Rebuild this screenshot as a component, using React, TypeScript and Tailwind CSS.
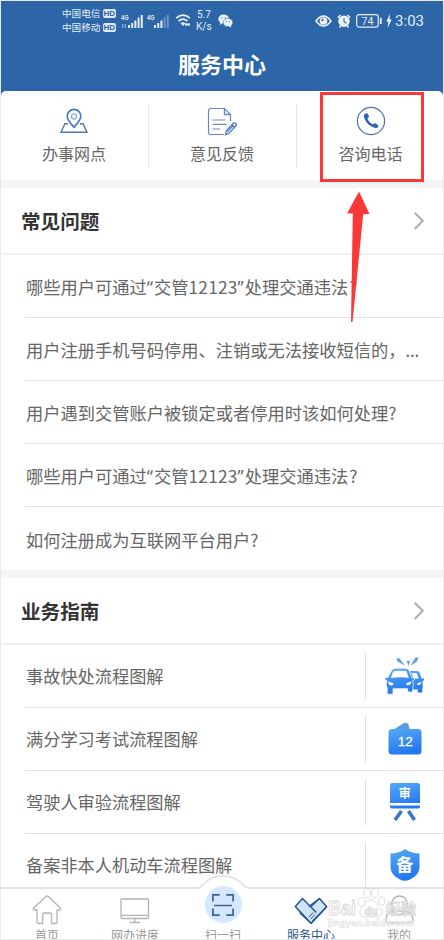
import React, { FC, ReactNode } from "react";

type IconProps = {
	className?: string;
};

// Status bar icons
const Signal: FC<{ weak?: boolean }> = ({ weak = false }) => (
	<svg className="w-[22px] h-[18px]" viewBox="0 0 22 18" fill="#e4edf8">
		<text x="0" y="8" fontSize="8" fontWeight="700" fontFamily="Liberation Sans, sans-serif" textLength="7.5" lengthAdjust="spacingAndGlyphs">
			4G
		</text>
		{!weak && <path d="M1 12h1.3v4H1zM3.6 12h1.3v4H3.6z" opacity="0.5" />}
		<path d="M7 13h2v3H7zM10.2 11h2v5h-2zM13.4 8.5h2V16h-2z" />
		<path d="M16.6 5.5h2V16h-2zM19.8 3h2v13h-2z" opacity={weak ? 0.35 : 1} />
	</svg>
);

const Wifi: FC<IconProps> = ({ className }) => (
	<svg className={className} viewBox="0 0 17 15" fill="none" stroke="#e4edf8" strokeWidth="1.8">
		<path d="M1.2 5.2Q8 -1 14.8 5.2M3.6 8Q8 4.2 12.4 8" />
		<path d="M5.5 10.3Q8 8.4 10.5 10.3L8 13z" fill="#e4edf8" stroke="none" />
		<path d="M10 11.5h5" strokeWidth="2.2" />
	</svg>
);

const WeChat: FC<IconProps> = ({ className }) => (
	<svg className={className} viewBox="0 0 15 14">
		<ellipse cx="5.7" cy="5" rx="5.4" ry="4.6" fill="#e9f1fa" />
		<path d="M2.5 8L2 11l3-2z" fill="#e9f1fa" />
		<ellipse cx="10" cy="8.5" rx="4.8" ry="4.1" fill="#e9f1fa" stroke="#2d67a9" strokeWidth="0.5" />
		<path d="M10.5 12l2.6 1.6-.3-2.5z" fill="#e9f1fa" />
		<g fill="#2d67a9">
			<circle cx="3.9" cy="3.9" r="0.6" />
			<circle cx="7.3" cy="3.9" r="0.6" />
			<circle cx="8.4" cy="7.6" r="0.5" />
			<circle cx="11.5" cy="7.6" r="0.5" />
		</g>
	</svg>
);

const Eye: FC<IconProps> = ({ className }) => (
	<svg className={className} viewBox="0 0 17 12" fill="none" stroke="#f1f6fc" strokeWidth="1.5">
		<path d="M1 6Q8.5 -4 16 6Q8.5 16 1 6Z" />
		<circle cx="8.5" cy="6" r="3.8" fill="#f1f6fc" stroke="none" />
		<path d="M6 5.8A2.3 2.3 0 0 1 8.5 3.7V6z" fill="#2d67a9" stroke="none" />
	</svg>
);

const Alarm: FC<IconProps> = ({ className }) => (
	<svg className={className} viewBox="0 0 14 14" fill="none" stroke="#f1f6fc">
		<circle cx="7" cy="7.3" r="5.7" fill="#f1f6fc" stroke="none" />
		<path d="M.8 3.8L3.6 1M13.2 3.8L10.4 1M2.5 13.5l1.3-1.7M11.5 13.5l-1.3-1.7" strokeWidth="1.5" />
		<path d="M7 4v3.6l2.4 1.6" stroke="#2d67a9" strokeWidth="1.1" />
	</svg>
);

const Battery: FC = () => (
	<svg className="w-[27px] h-[14px]" viewBox="0 0 27 14" fill="none" stroke="#e4edf8">
		<rect x="0.7" y="0.7" width="21.6" height="12.4" rx="2.5" strokeWidth="1.2" />
		<path d="M24.8 3.8v6.2" strokeWidth="1.8" />
		<text x="5.5" y="10.8" fontSize="10.5" fill="#e4edf8" stroke="none" fontFamily="Roboto, sans-serif">
			74
		</text>
	</svg>
);

const Bolt: FC = () => (
	<svg className="w-[6px] h-[14px]" viewBox="0 0 6 14" fill="#f1f6fc">
		<path d="M4 0L.3 7.5h2L1.6 14 5.7 5.500H3.500z" />
	</svg>
);

// Shortcut icons
const Location: FC = () => (
	<svg className="w-[28px] h-[26px]" viewBox="0 0 28 26" fill="none" stroke="#4a76c4" strokeWidth="1.4">
		<path d="M8 15.7H4.9L1 24.3h26L23 15.700h-3" stroke="#5277b8" />
		<path d="M14 19.3C11.5 16 7.2 12.3 7.2 8.2a6.8 6.8 0 0 1 13.6 0c0 4.1-4.3 7.8-6.8 11.1z" strokeWidth="1.7" />
		<circle cx="14" cy="8.4" r="2.6" stroke="#89a9df" strokeWidth="1.3" />
	</svg>
);

const Feedback: FC = () => (
	<svg className="w-[30px] h-[29px]" viewBox="0 0 30 29" fill="none" stroke="#6688c8" strokeWidth="1.2">
		<path d="M17 27.5H3.5a2 2 0 0 1-2-2V3.5a2 2 0 0 1 2-2h14l6 6V14" />
		<path d="M17.5 1.5v6h6" strokeWidth="1.4" />
		<path d="M5.5 13h13M5.5 17.3h14M5.5 22h7.5" />
		<path d="M18.5 27.8l.8-4 6.8-7.3a1.8 1.8 0 0 1 2.7 2.5l-6.7 7.3zM20.5 24.8l6-6.5M24.8 17.9l2.6 2.5" stroke="#4774bd" />
	</svg>
);

const Phone: FC = () => (
	<svg className="w-[30px] h-[30px]" viewBox="0 0 30 30" fill="none">
		<circle cx="15" cy="15" r="13.6" stroke="#4d72b1" strokeWidth="1.2" />
		<path
			d="M8.6 8.2l1.8-.9c.6-.3 1.2 0 1.5.6l1 2.3c.2.6.1 1-.4 1.4l-1.1.9c.9 2.600 2.800 4.600 5.500 6l1.300-1c.5-.4 1-.4 1.500-.1l2.300 1.500c.5.4.6.9.3 1.500-.8 1.500-2.500 2-4.400 1.200C12.800 19.700 9.400 16 8 11.300c-.3-1.200-.2-2.400.6-3.100z"
			fill="#2d63b8"
		/>
	</svg>
);

// Guide icons
const BlueGradient: FC<{ id: string }> = ({ id }) => (
	<defs>
		<linearGradient id={id} x1="0" y1="0" x2="0.3" y2="1">
			<stop offset="0" stopColor="#56aaf5" />
			<stop offset="1" stopColor="#2478ee" />
		</linearGradient>
	</defs>
);

const Cars: FC = () => (
	<svg className="w-[40px] h-[38px]" viewBox="0 0 40 38">
		<path d="M11.5 1.2h2.8L20 8.6l-7.6-4.2zM21.5 4.2l3.3-.6L24 9zM30.5.5h3L32 4.5 25.5 8.8z" fill="#5f9fdc" />
		<BlueGradient id="cars" />
		<g fill="url(#cars)">
			<path d="M25 14h7c1.3 0 2.4.9 2.8 2.3l1.8 5.5 2.4-.5v2.2l-1.5.5.3 4.8-.5 3v3.7h-4.6v-3h-5z" />
			<path
				d="M6.3 14.2c.6-1.5 1.5-2.2 3-2.4 4.3-.6 8.5-.6 12.5 0 1.2.2 2 .8 2.4 2l2.7 7.2 2.4-.5.2 2.3-1.7.8.4 4.6-.5 3.2v3.5h-5v-3.2H8v5.500H2.200V31l-1-2.800.5-5-1.900-.8v-2.200l3 .4z"
				stroke="#fff"
				strokeWidth="0.7"
			/>
		</g>
		<path d="M8 14.4c4.7-1 9.7-1 13.6-.2l2.2 6.6c-6-.9-12-.8-18 .2z" fill="#fff" />
		<path d="M26.5 16h5.2l2 5.5h-5z" fill="#fff" />
		<path d="M3.2 24.5l5 1.8c.4 1.3-.4 2.2-1.8 2.2-2-.2-3.2-1.500-3.200-4zM26.300 24.200l-5 2c-.4 1.300.4 2.100 1.800 2 2-.2 3.200-1.500 3.200-4zM36.300 24.800l-4 1.600c-.2 1 .3 1.700 1.300 1.700 1.700-.2 2.700-1.300 2.700-3.300z" fill="#fff" />
	</svg>
);

const Wallet: FC = () => (
	<svg className="w-[34px] h-[33px]" viewBox="0 0 34 33">
		<BlueGradient id="wallet" />
		<path d="M5 8l10-6.5c2.5-1.3 5-.5 5.700 1.500l1 4z" fill="#5a9fe6" />
		<rect x="0.5" y="7" width="33" height="25.5" rx="3.5" fill="url(#wallet)" />
		<text x="17.2" y="24" textAnchor="middle" fontSize="13.5" fill="#fff" fontFamily="Liberation Sans, sans-serif" stroke="#fff" strokeWidth="0.3">
			12
		</text>
	</svg>
);

const Easel: FC = () => (
	<svg className="w-[30px] h-[38px]" viewBox="0 0 30 38">
		<BlueGradient id="easel" />
		<path d="M2.5 0h25A2.300 2.300 0 0 1 30 2.300V20H0V2.300A2.300 2.300 0 0 1 2.500 0zM0 22.500h30v1.300a1.800 1.800 0 0 1-2 1.700H2a1.800 1.800 0 0 1-2-1.700z" fill="url(#easel)" />
		<path d="M11.5 28L5 37M18.5 28l6 9" stroke="#3279cc" strokeWidth="3.6" />
		<text x="14.7" y="15" textAnchor="middle" fontSize="12" fontWeight="700" fill="#fff" fontFamily="Noto Sans CJK SC, sans-serif">
			审
		</text>
	</svg>
);

const Shield: FC = () => (
	<svg className="w-[30px] h-[32px]" viewBox="0 0 30 32">
		<BlueGradient id="shield" />
		<path d="M15 0c4 3.2 9 4.3 14.5 4.5V18c0 6.500-5 10-9.500 12.500-3.300 1.700-6.700 1.700-10 0C5.500 28 .5 24.500.5 18V4.500C6 4.300 11 3.200 15 0z" fill="url(#shield)" />
		<text x="14.8" y="21.5" textAnchor="middle" fontSize="17" fontWeight="700" fill="#fff" fontFamily="Noto Sans CJK SC, sans-serif">
			备
		</text>
	</svg>
);

// Tab bar icons
const Home: FC = () => (
	<svg className="shrink-0 w-[30px] h-[30px]" viewBox="0 0 30 30" fill="none" stroke="#b3b3b3" strokeWidth="1.3" strokeLinejoin="round">
		<path d="M13.7 1.7a2 2 0 0 1 2.8 0L28.3 13c.7.7.3 2-.8 2H25v11.500a2 2 0 0 1-2 2h-3.500V20a2 2 0 0 0-2-2h-4.800a2 2 0 0 0-2 2v8.500H7a2 2 0 0 1-2-2V15H2.400c-1 0-1.500-1.300-.8-2z" />
	</svg>
);

const Monitor: FC = () => (
	<svg className="shrink-0 w-[30px] h-[26px]" viewBox="0 0 30 26" fill="none" stroke="#b3b3b3" strokeWidth="1.3">
		<rect x="1" y="1" width="27.5" height="19.5" rx="1" />
		<path d="M1 17.3h27.5M14.7 20.5v4M9.5 24.5h10.5" />
	</svg>
);

const Scan: FC = () => (
	<svg className="w-[22px] h-[22px]" viewBox="0 0 22 22" fill="none" stroke="#35659b" strokeWidth="1.7">
		<path d="M.9 7.5V.9h6.800M14.300.9h6.800v6.600M21.100 14.500v6.600h-6.800M7.700 21.100H.9v-6.600M2 11.500h18" />
	</svg>
);

const Handshake: FC = () => (
	<svg className="shrink-0 w-[34px] h-[28px]" viewBox="0 0 34 28" fill="#cfe3fb" stroke="#28578f" strokeWidth="1.5" strokeLinejoin="round">
		<path d="M25.5 1.5l7.2 8.2L17 26.3 6 16z" />
		<path d="M8.5 1.5L1.3 9.5 16.8 26.3l6-6.300-5-6.500z" stroke="none" />
		<path d="M32.7 9.700L17 26.300 1.300 9.500l7.200-8L22.300 15.500M25.500 1.500L16.800 9.800" fill="none" />
		<path d="M15 20l4.3-4.5M16.7 22l4.3-4.5M18.5 23.8l3.5-3.6" strokeWidth="1" />
	</svg>
);

const Person: FC = () => (
	<svg className="shrink-0 w-[29px] h-[29px]" viewBox="0 0 29 29" fill="none" stroke="#b3b3b3" strokeWidth="1.3" strokeLinejoin="round">
		<circle cx="14.5" cy="8.7" r="7.7" />
		<path d="M8.5 16.5c2.5 4.3 9.5 4.3 12 0 4.5.5 7.500 3.500 7.500 8.500 0 1.800-.8 2.800-2.500 2.800h-22C1.800 27.800 1 26.800 1 25c0-5 3-8 7.500-8.500z" />
	</svg>
);

const Chevron: FC = () => (
	<svg className="w-[12px] h-[20px]" viewBox="0 0 12 20" fill="none" stroke="#b0b0b0" strokeWidth="2.2">
		<path d="M1.7 1.7l8 8.1-8 8.1" />
	</svg>
);

const violation = (
	<>
		哪些用户可通过
		<span className="mr-px font-['Noto_Sans']">“</span>
		交管<span className="tracking-[0.25px]">12123</span>
		<span className="mr-px font-['Noto_Sans']">”</span>
		处理交通违法<span className="ml-px">?</span>
	</>
);

const questions: ReactNode[] = [
	violation,
	<>
		用户注册手机号码停用、注销或无法接收短信的，
		<span className="font-['Noto_Sans'] tracking-[1px]">…</span>
	</>,
	"用户遇到交管账户被锁定或者停用时该如何处理?",
	violation,
	"如何注册成为互联网平台用户?",
];

const guides = [
	{ title: "事故快处流程图解", icon: <Cars /> },
	{ title: "满分学习考试流程图解", icon: <Wallet /> },
	{ title: "驾驶人审验流程图解", icon: <Easel /> },
	{ title: "备案非本人机动车流程图解", icon: <Shield /> },
];

const shortcuts = [
	{ title: "办事网点", icon: <Location /> },
	{ title: "意见反馈", icon: <Feedback /> },
	{ title: "咨询电话", icon: <Phone /> },
];

const StatusBar: FC = () => (
	<div className="flex items-center h-[39px] pl-[61px] pr-[19px] text-[#e4edf8]">
		<div className="flex flex-col gap-px text-[9.6px] leading-[13px]">
			{["中国电信", "中国移动"].map((name) => (
				<div key={name} className="flex items-center gap-[2.5px]">
					<span>{name}</span>
					<span className="flex items-center justify-center w-[13px] h-[9px] rounded-[2px] bg-[#dce9f7] text-[#2d67a9] font-['Liberation_Sans'] text-[8px] leading-none font-bold">
						HD
					</span>
				</div>
			))}
		</div>
		<div className="flex items-center ml-[5px] gap-[4px]">
			<Signal />
			<Signal weak />
		</div>
		<Wifi className="w-[17px] h-[15px] ml-[6px]" />
		<div className="w-[16px] ml-[4px] font-[Roboto] text-[10px] leading-[12px] text-center">
			5.7
			<br />
			K/s
		</div>
		<WeChat className="w-[15px] h-[14px] ml-[6px]" />
		<div className="flex items-center ml-auto">
			<Eye className="w-[17px] h-[12px]" />
			<Alarm className="w-[14px] h-[14px] ml-[5px] mr-[5px]" />
			<Battery />
			<span className="ml-[3px] mr-[3px]">
				<Bolt />
			</span>
			<span className="pt-[2px] font-[Roboto] text-[15px] leading-none">3:03</span>
		</div>
	</div>
);

const SectionTitle: FC<{ children: ReactNode }> = ({ children }) => (
	<div className="flex items-center justify-between shrink-0 h-[67px] pl-[20px] pr-[18px] border-b-2 border-[#f0f0f0]">
		<h2 className="pt-px text-[19.6px] leading-none font-bold text-[#333]">{children}</h2>
		<Chevron />
	</div>
);

const Watermark: FC = () => (
	<svg className="absolute left-[325px] top-[884px] w-[100px] h-[46px]" viewBox="0 0 100 46" fill="#fff" fillOpacity="0.6" stroke="#d4d4d4" strokeWidth="0.8" fontFamily="Liberation Sans, sans-serif" fontWeight="700">
		<text x="2" y="30" fontSize="20" textLength="28" lengthAdjust="spacingAndGlyphs">
			Bai
		</text>
		<ellipse cx="35.5" cy="17" rx="3.3" ry="4.3" />
		<ellipse cx="41" cy="8" rx="3.2" ry="4.5" />
		<ellipse cx="49" cy="8" rx="3.2" ry="4.5" />
		<ellipse cx="55.5" cy="16" rx="3.3" ry="4.3" />
		<path d="M45 14.5c4 0 5.5 5 8.500 7.500 5 4 2.500 10.500-3 10-4-.6-7-.6-11 0-5.500.5-8-6-3-10 3-2.500 4.500-7.500 8.500-7.500z" />
		<text x="38.5" y="29.5" fontSize="11">
			du
		</text>
		<text x="60" y="28.5" fontSize="15" fontFamily="Noto Sans CJK SC, sans-serif">
			经验
		</text>
		<text x="2" y="41" fontSize="9.5" textLength="86" stroke="#e2e2e2" strokeWidth="0.6">
			jingyan.baidu.com
		</text>
	</svg>
);

const App: FC = () => (
	<div className="relative flex flex-col w-[444px] h-[940px] overflow-hidden border border-[#eaeaea] bg-white font-['Noto_Sans_CJK_SC',sans-serif]">
		<header className="shrink-0 h-[90px] bg-[#2c66a9]">
			<StatusBar />
			<h1 className="pt-[11px] text-center text-[22px] leading-[24px] font-bold text-white">服务中心</h1>
		</header>

		<div className="shrink-0 h-[89px] bg-[#2c66a9]">
			<div className="h-full rounded-t-[5px] bg-white">
				<div className="flex w-[444px] h-full">
					{shortcuts.map(({ title, icon }, i) => (
						<div key={title} className="flex flex-1 items-center">
							<div className="flex flex-1 flex-col items-center pr-px">
								<div className="flex items-center justify-center h-[32px]">{icon}</div>
								<div className="mt-[6px] mb-[3px] text-[16px] leading-[20px] text-[#666]">{title}</div>
							</div>
							{i < 2 && <div className="w-px h-[62px] bg-[#e6e6e6]" />}
						</div>
					))}
				</div>
			</div>
		</div>

		<div className="shrink-0 h-[8px] bg-[#f4f4f7]" />
		<SectionTitle>常见问题</SectionTitle>
		<div className="shrink-0 pl-[24px]">
			{questions.map((question, i) => (
				<div
					key={i}
					className="flex items-center h-[63px] pt-[2px] pl-px border-b border-[#e2e2e2] text-[17.25px] whitespace-nowrap text-[#666] last:border-b-0"
				>
					<span>{question}</span>
				</div>
			))}
		</div>

		<div className="shrink-0 h-[8px] bg-[#f5f5f5]" />
		<SectionTitle>业务指南</SectionTitle>
		<div className="flex-1 min-h-0 pl-[24px] overflow-hidden">
			{guides.map(({ title, icon }) => (
				<div key={title} className="flex items-center h-[63px] border-b border-[#e2e2e2]">
					<span className="flex-1 pl-px text-[17.2px] text-[#666]">{title}</span>
					<div className="w-px h-[46px] bg-[#e0e0e0]" />
					<div className="flex items-center justify-center w-[77px] pb-px">{icon}</div>
				</div>
			))}
		</div>

		<nav className="relative flex shrink-0 h-[52px] pl-[2px] border-t-2 border-[#e2e2e2] bg-white text-[12px] leading-[14px] text-[#999]">
			{/* raised edge behind the scan button */}
			<svg className="absolute left-[197px] top-[-15px] w-[50px] h-[20px]" viewBox="0 0 50 20">
				<path d="M0 14Q2.5 13.5 4.5 11A28 28 0 0 1 45.5 11Q47.5 13.5 50 14V20H0z" fill="#fff" />
				<path d="M0 14Q2.5 13.5 4.5 11A28 28 0 0 1 45.5 11Q47.5 13.5 50 14" fill="none" stroke="#e0e0e0" strokeWidth="1.5" />
			</svg>
			<div className="flex flex-1 flex-col items-center pt-[6px]">
				<Home />
				<span className="mt-[3px]">首页</span>
			</div>
			<div className="flex flex-1 flex-col items-center pt-[9px]">
				<Monitor />
				<span className="mt-[4px]">网办进度</span>
			</div>
			<div className="flex flex-1 flex-col items-center">
				<div className="relative flex items-center justify-center shrink-0 -mt-[3px] w-[37px] h-[37px] rounded-full bg-[#d4e7ff]">
					<Scan />
				</div>
				<span className="mt-[5px]">扫一扫</span>
			</div>
			<div className="flex flex-1 flex-col items-center pt-[8px] text-[#28578f]">
				<Handshake />
				<span className="mt-[3px]">服务中心</span>
			</div>
			<div className="flex flex-1 flex-col items-center pt-[6px]">
				<Person />
				<span className="mt-[4px]">我的</span>
			</div>
		</nav>

		<Watermark />

		{/* highlight over the phone shortcut */}
		<div className="absolute left-[319px] top-[91px] w-[104px] h-[90px] border-[3px] border-[#fb3838]" />
		<svg className="absolute left-[345px] top-[190px] w-[26px] h-[132px]" viewBox="0 0 26 132">
			<path d="M13 .5l10.5 22.500H17.200L6.500 131H5L6.800 22.500H1z" fill="#fb3838" />
		</svg>
	</div>
);

export default App;
